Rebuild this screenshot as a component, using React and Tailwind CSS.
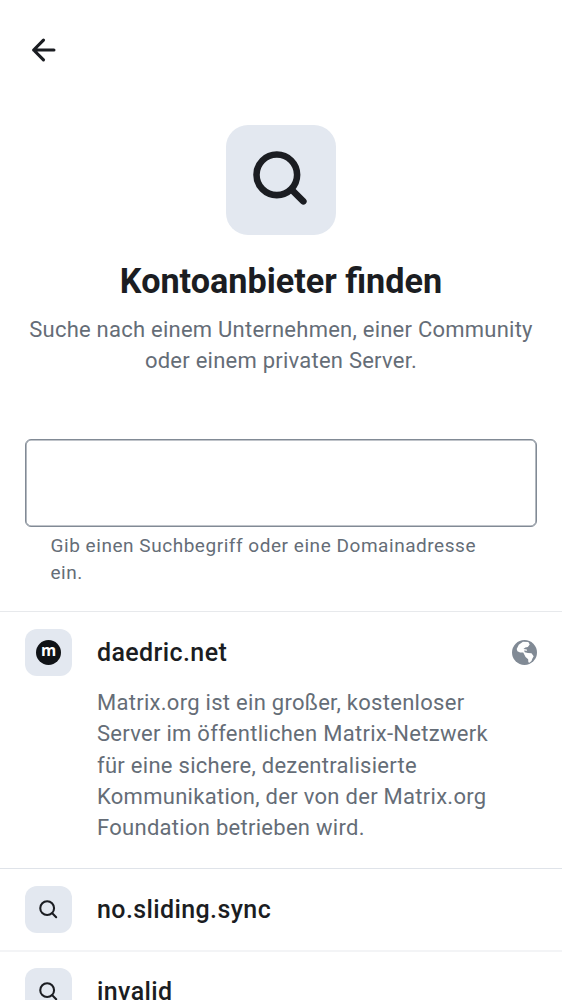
import React from "react";

function SearchIcon({ className, weight = 2 }) {
  return (
    <svg viewBox="0 0 24 24" className={className} fill="none" stroke="currentColor" strokeWidth={weight} strokeLinecap="round">
      <circle cx="10.5" cy="10.5" r="6.5" />
      <path d="m15.3 15.3 3.7 3.7" />
    </svg>
  );
}

function Provider({ name, icon, children, trailing, line }) {
  return (
    <li>
      <div className={line} />
      <div className="flex h-[47px] items-center px-[25px]">
        <span className="flex size-[47px] items-center justify-center rounded-xl bg-[#e3e8f0] text-[#1b1d22]">{icon}</span>
        <h2 className="ml-[25px] flex-1 whitespace-nowrap text-[25px] leading-[38px] font-medium tracking-[0.39px] text-[#1b1d22]">{name}</h2>
        {trailing}
      </div>
      {children}
    </li>
  );
}

export default function App() {
  return (
    <main className="h-[1000px] overflow-hidden bg-white font-[Roboto,sans-serif] text-[#656d77]">
      <header className="flex h-[99px] items-center px-[24px]">
        <svg viewBox="0 0 24 24" className="size-[38px] text-[#1b1d22]" fill="none" stroke="currentColor" strokeWidth="2" strokeLinecap="round" strokeLinejoin="round">
          <path d="M12.3 5.8 6.1 12l6.2 6.2M6.1 12h12.8" />
        </svg>
      </header>
      <section className="flex h-[340px] flex-col items-center pt-[26px] text-center">
        <div className="flex size-[109.5px] items-center justify-center rounded-[22px] bg-[#e3e8f0] text-[#1b1d22]">
          <SearchIcon className="size-[75px]" weight="2.1" />
        </div>
        <h1 className="mt-[24px] whitespace-nowrap text-[34.2px] leading-[44px] font-bold text-[#1b1d22]">Kontoanbieter finden</h1>
        <p className="mt-[11.5px] whitespace-nowrap text-[22px] leading-[31.25px] tracking-[0.24px]">Suche nach einem Unternehmen, einer Community<br />oder einem privaten Server.</p>
      </section>
      <section className="h-[172px] px-[25px]">
        <input aria-label="Kontoanbieter" className="block h-[87.5px] w-full rounded-md border border-[#818a95] px-6 text-[25px] shadow-[inset_0_0_0_0.6px_#818a95] outline-none" />
        <p className="mt-[5.5px] ml-[25.5px] whitespace-nowrap text-[19px] leading-[27px] tracking-[0.54px]">Gib einen Suchbegriff oder eine Domainadresse<br />ein.</p>
      </section>
      <ul>
        <Provider
          line="mb-[17px] h-px bg-[#e7e9ec]"
          name="daedric.net"
          icon={<span className="flex size-[25px] items-center justify-center rounded-full bg-[#101317] pb-[3px] font-['Open_Sans',sans-serif] text-[15.5px] leading-none font-bold text-white">m</span>}
          trailing={
            <svg viewBox="0 0 24 24" className="size-[25px] text-[#818a95]">
              <circle cx="12" cy="12" r="12" fill="currentColor" />
              <path d="M4.5 8.6 6.5 4.5l4-2.8 5.2.2 1.3 2.5-1.8 2.4-2.4.4-1.8 1.5 3.2.4.3 1.2-3-.3.8 1.7 3 .7 3.4.2 2.1 3.1-1.3 2.3-.8 2.2-2 1.6-1-.4-.2-3-2.5-2.1-1.6-3-.6-1.3-3-.1-2.6-1.2z" fill="white" />
            </svg>
          }
        >
          <p className="mt-[11px] ml-[97px] h-[181px] whitespace-nowrap text-[22px] leading-[31.25px] tracking-[0.28px]">Matrix.org ist ein großer, kostenloser<br />Server im öffentlichen Matrix-Netzwerk<br />für eine sichere, dezentralisierte<br />Kommunikation, der von der Matrix.org<br />Foundation betrieben wird.</p>
        </Provider>
        <Provider line="mb-[17.4px] h-px bg-[#dfe3e9]" name="no.sliding.sync" icon={<SearchIcon className="size-[25.5px]" weight="1.95" />}><div className="h-[16.6px]" /></Provider>
        <Provider line="mb-[16.5px] h-[2px] bg-[#f3f4f6]" name="invalid" icon={<SearchIcon className="size-[25.5px]" weight="1.95" />} />
      </ul>
    </main>
  );
}
